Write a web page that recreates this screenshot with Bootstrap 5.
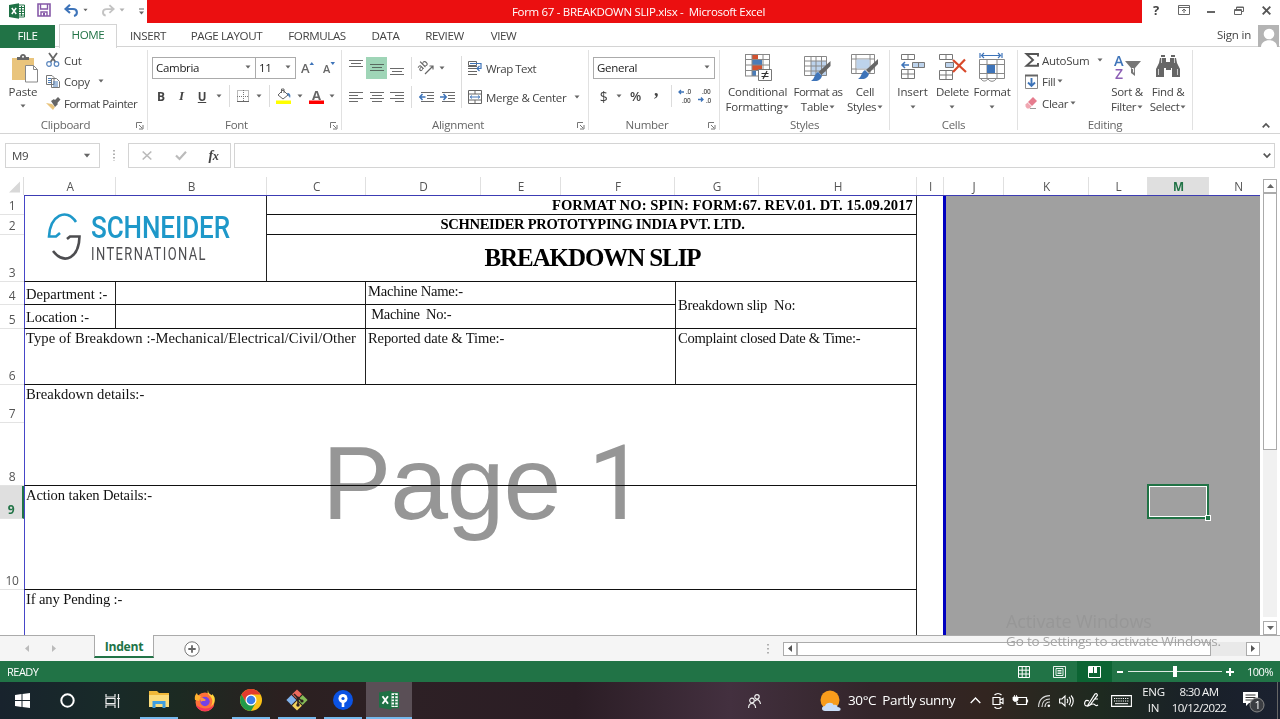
<!DOCTYPE html>
<html lang="en">
<head>
<meta charset="utf-8">
<title>Form 67 - BREAKDOWN SLIP.xlsx - Microsoft Excel</title>
<meta name="viewport" content="width=device-width, initial-scale=1">
<link href="https://cdn.jsdelivr.net/npm/bootstrap@5.3.0/dist/css/bootstrap.min.css" rel="stylesheet">
<style>
:root{--xl:#217346;--ln:#d4d4d4}
html,body{height:719px;overflow:hidden}
body{font:11.5px/15px "Open Sans","Noto Sans",sans-serif;color:#444;background:#fff;letter-spacing:-.3px}
svg{display:block;flex:none;overflow:visible}
span{white-space:nowrap}
.g{display:grid;align-items:center;justify-items:center}
.g>.l{justify-self:start}
/* title bar and ribbon tabs */
.titlebar{height:24px;grid-template-columns:33px 22px 42px 28px 22px 995px 28px 27px 28px 27px 28px;background:#fff}
.doc{background:#eb0f10;height:23px;width:100%;align-self:start;color:#fff;text-align:center;line-height:23px;padding-right:12px;font-size:11.5px;letter-spacing:-.32px}
.tabs{height:23px;grid-template-columns:55px 4px 58px 62px 95px 86px 51px 67px 51px 684px 44px 23px;border-bottom:1px solid var(--ln);font-size:11.6px;letter-spacing:-.4px}
.tabs>span{margin-top:-2px}
.tabs .file{background:var(--xl);color:#fff;width:100%;height:23px;text-align:center;line-height:21px;margin:0}
.tabs .home{border:1px solid var(--ln);border-bottom:0;background:#fff;color:var(--xl);width:100%;height:24px;line-height:20px;text-align:center;margin:0}
/* ribbon */
.ribbon{height:87px;border-bottom:1px solid var(--ln)}
.grp{height:80px;margin-top:3px;border-right:1px solid #e1e1e1;position:relative}
.grp .body{height:67px}
.grp .cap{height:13px;line-height:15px;color:#666;text-align:center}
.grp .dlg{position:absolute;right:3px;bottom:0}
.big{text-align:center;line-height:15px}
.field{border:1px solid #ababab;height:22px;width:100%;padding:0 4px 2px 3px;background:#fff;color:#222}
.vs{width:1px;height:22px;background:#dcdcdc}
.rows3{grid-template-rows:20px 22px 22px;justify-items:start;align-content:start}
.b{font-weight:700}
/* formula bar */
.fbar{height:43px;grid-template-columns:5px 95px 28px 103px 3px 1041px}
.fbox{border:1px solid var(--ln);height:25px;width:100%}
/* sheet */
.cols{display:grid;height:18px;grid-template-columns:24px 92px 151px 99px 115px 80px 114px 84px 158px 27px 60px 85px 59px 61px 51px;text-align:center;line-height:18px;font-size:11.8px;color:#555}
.cols>span{border-right:1px solid #e0e0e0;padding-left:1px}
.cols .on{background:#dfdfdf;color:var(--xl);font-weight:700;border-bottom:2px solid var(--xl)}
.cols>span:last-child{border:0;padding-left:8px}
.rowsH{width:24px;display:grid;grid-template-rows:20px 20px 47px 23px 24px 56px 38px 63px 33px 71px 45px;font-size:12px;color:#555}
.rowsH>span{display:flex;align-items:flex-end;justify-content:center;border-bottom:1px solid #e3e3e3;line-height:17px}
.rowsH>.on{background:#dfdfdf;color:var(--xl);font-weight:700;border-right:2px solid var(--xl)}
.sheet{width:1236px;height:440px;display:grid;grid-template-columns:92px 151px 99px 310px 241px 26px 3px 202px 61px 51px;grid-template-rows:19px 20px 47px 23px 24px 56px 101px 104px 45px;background:#a0a0a0;border-top:1px solid #3c3cb4;font:14.6px/17px "Liberation Serif",serif;color:#111;position:relative;letter-spacing:-.13px}
.c{background:#fff;border-right:1px solid #222;border-bottom:1px solid #111;padding:1px 0 0 2px;white-space:pre;overflow:hidden}
.c.a{border-left:1px solid #4646c8;padding-left:1px}
.bt{font-weight:700;color:#000}
.mark1{position:absolute;left:298px;top:229px;font:104px/116px "Liberation Sans",Arial,sans-serif;color:#969696;letter-spacing:-1.2px;mix-blend-mode:multiply}
.mark1 i{font-family:Roboto;font-style:normal}
.sel{position:absolute;left:1123px;top:288px;width:62px;height:35px;border:2px solid var(--xl);box-shadow:inset 0 0 0 1px #fff}
.sel::after{content:"";position:absolute;right:-4px;bottom:-4px;width:6px;height:6px;background:var(--xl);border:1px solid #fff;box-sizing:border-box}
.vsb{width:20px;padding:0 3px;height:458px}
.sb{border:1px solid #ababab;background:#fff;width:14px;height:14px;display:flex;align-items:center;justify-content:center}
/* bottom */
.sheetbar{height:26px;background:#f5f5f5;grid-template-columns:29px 27px 38px 60px 76px 536px 17px 14px 414px 35px 14px 20px;border-top:1px solid #ababab;position:relative}
.tab1{background:#fff;color:var(--xl);font-weight:700;width:100%;height:23px;align-self:start;margin-top:-1px;border:1px solid #ababab;border-top:0;border-bottom:2px solid var(--xl);text-align:center;line-height:23px;font-size:12.2px}
.act{position:absolute;left:1006px;white-space:nowrap;pointer-events:none}
.status{height:21px;background:var(--xl);color:#fff;grid-template-columns:7px 999px 35px 36px 35px 16px 94px 16px 44px;font-size:11px;letter-spacing:-.5px}
.status>span.l{line-height:19px;margin-top:-1px}
.tbar{height:37px;background:linear-gradient(90deg,#18232d,#182a29 8%,#1c2a22 14%,#2b2020 22%,#2d2025 32%,#2b1d25 45%,#43303f 57%,#33252a 68%,#322520 77%,#1e2a20 86%,#192029 94%,#1b2130);grid-template-columns:45px 45px 46px 46px 46px 46px 46px 46px 46px 319px 46px 65px 6px 117px 20px 25px 21px 25px 20px 30px 30px 35px 56px 47px 6px;color:#f4f4f4}
.tbar>.ap{width:38px;height:37px;display:flex;align-items:center;justify-content:center;border-bottom:2px solid #76b9ed}
.tbar>.cur{width:46px;background:#5a4f56}
.sm{text-align:center;line-height:16px;margin-top:-1px}
</style>
</head>
<body>
<svg width="0" height="0" class="position-absolute">
<symbol id="cr" viewBox="0 0 6 4"><path d="M.5 .5h5L3 3.500z" fill="#666"/></symbol>
<symbol id="dl" viewBox="0 0 8 8"><path d="M.5 6V.5H6M3 3l3 3M7 3v4H3" fill="none" stroke="#777"/></symbol>
<symbol id="xl" viewBox="0 0 16 16"><path d="M9 2h6.500v12H9z" fill="#fff" stroke="#217346"/><path d="M10 4.500h5M10 7h5M10 9.500h5M10 12h5M12.500 3v10" stroke="#217346"/><path d="M0 2l10-1.700v15.400L0 14z" fill="#1e7145"/><path d="M2.800 5l4.400 6M7.200 5l-4.400 6" stroke="#fff" stroke-width="1.500"/></symbol>
<symbol id="ac" viewBox="0 0 14 12"><path d="M0 1.500h14M2 4.500h10M0 7.500h14M2 10.500h10" stroke="#6a6a6a"/></symbol>
</svg>

<header class="g titlebar">
  <svg width="16" height="16" style="margin-top:-3px"><use href="#xl"/></svg>
  <svg width="14" height="14" viewBox="0 0 14 14" class="mb-1"><path d="M1 1h12v12H1z" fill="#fff" stroke="#8659a8" stroke-width="1.600"/><path d="M3.500 1v5h7V1M4 13V9h6v4" fill="none" stroke="#8659a8" stroke-width="1.400"/><path d="M6 10h2v3H6z" fill="#8659a8"/></svg>
  <span class="d-flex align-items-center gap-1 mb-1"><svg width="15" height="13" viewBox="0 0 15 13"><path d="M2 5h7c5 0 5 6 1 7M6 .8L1.500 5L6 9" fill="none" stroke="#3e74b9" stroke-width="2.100"/></svg><svg width="5" height="4"><use href="#cr"/></svg></span>
  <span class="d-flex align-items-center gap-1 mb-1 opacity-50 ms-1"><svg width="14" height="13" viewBox="0 0 15 13"><path d="M13 5H6C1 5 1 11 5 12M9 .8L13.500 5L9 9" fill="none" stroke="#888" stroke-width="2"/></svg><svg width="6" height="4"><use href="#cr"/></svg></span>
  <svg width="5" height="7" viewBox="0 0 5 7" style="margin:0 0 2px 10px"><path d="M0 1h5" stroke="#666"/><path d="M0 3.500h5L2.500 6.500z" fill="#666"/></svg>
  <div class="doc">Form 67 - BREAKDOWN SLIP.xlsx -&nbsp; Microsoft Excel</div>
  <span class="b mb-1" style="font-size:13px">?</span>
  <svg width="12" height="10" viewBox="0 0 12 10" class="mb-1"><path d="M.5 .5h11v9H.5zM.5 2.500h11M6 8V4.500M4 6l2-2 2 2" fill="none" stroke="#666"/></svg>
  <svg width="8" height="2" viewBox="0 0 8 2"><path d="M0 1h8" stroke="#666" stroke-width="2"/></svg>
  <svg width="10" height="9" viewBox="0 0 10 9" class="mb-1"><path d="M2.500 3V1h7v4.500H7.500M.5 3.500h7v5h-7zM.5 4.500h7M2.500 1.500h7" fill="none" stroke="#666"/></svg>
  <svg width="9" height="9" viewBox="0 0 9 9" class="mb-1"><path d="M.7 .7l7.600 7.600M8.300 .7L.7 8.300" stroke="#555" stroke-width="1.900"/></svg>
</header>

<nav class="g tabs">
  <span class="file">FILE</span><i></i><span class="home">HOME</span><span>INSERT</span><span>PAGE LAYOUT</span><span>FORMULAS</span><span>DATA</span><span>REVIEW</span><span>VIEW</span><i></i><span class="l" style="font-size:11.500px;letter-spacing:-.2px;margin-left:4px;margin-top:-4px">Sign in</span>
  <svg width="21" height="22" viewBox="0 0 21 22"><path d="M0 0h21v22H0z" fill="#b4b4b4"/><circle cx="11" cy="9" r="5.300" fill="#fff"/><path d="M3 22c0-9 16-9 16 0z" fill="#fff"/></svg>
</nav>

<section class="ribbon d-flex">
  <div class="grp" style="width:148px">
    <div class="body g" style="grid-template-columns:46px 1fr">
      <div class="big d-flex flex-column align-items-center align-self-start pt-1">
        <svg width="28" height="29" viewBox="0 0 28 29" class="ms-1"><path d="M1 4h22v22H1z" fill="#e9c47c"/><path d="M6 6V3h3c0-4 6-4 6 0h3v3z" fill="#666"/><circle cx="12" cy="2.700" r="1" fill="#fff"/><path d="M14.500 11.500h8l4 4v12.500h-12z" fill="#fff" stroke="#888"/><path d="M22.500 11.500v4h4" fill="none" stroke="#888"/></svg>
        <span style="margin-top:1px;letter-spacing:-.1px">Paste</span><svg width="6" height="4" style="margin-top:5px"><use href="#cr"/></svg>
      </div>
      <div class="g rows3 w-100 align-self-start">
        <span class="d-flex align-items-center"><svg width="14" height="14" viewBox="0 0 14 14" style="margin-right:4px"><path d="M3 0l6.500 9M11 0L4.500 9" stroke="#666" stroke-width="1.800"/><circle cx="3" cy="11" r="2.300" fill="none" stroke="#5a86bd" stroke-width="1.200"/><circle cx="10.500" cy="11" r="2.300" fill="none" stroke="#5a86bd" stroke-width="1.200"/></svg>Cut</span>
        <span class="d-flex align-items-center"><svg width="14" height="13" viewBox="0 0 14 13" style="margin-right:4px"><path d="M.5 .5h5.500l2 2v7H.5zM5.500 3.500h5l3 3v6h-8z" fill="#fff" stroke="#777"/><path d="M2 3.500h3M2 5.500h3M2 7.500h3M7 7h5M7 9h5M7 11h5" stroke="#4a7cb8"/></svg>Copy<svg width="6" height="4" class="ms-2"><use href="#cr"/></svg></span>
        <span class="d-flex align-items-center" style="letter-spacing:-.5px"><svg width="15" height="13" viewBox="0 0 15 13" style="margin-right:3px"><path d="M0 6l6 1 3 3-2 3z" fill="#e9c47c"/><path d="M5 4l3-2 4 5-3 3zM8 4l4-4 2.500 2.500L10.500 7z" fill="#666"/></svg>Format Painter</span>
      </div>
    </div>
    <div class="cap" style="padding-right:16px">Clipboard</div><svg class="dlg" width="8" height="8"><use href="#dl"/></svg>
  </div>

  <div class="grp" style="width:194px">
    <div class="body">
      <div class="g" style="grid-template-columns:4px 104px 40px 22px 21px;padding-top:7px;height:29px">
        <i></i><div class="field d-flex align-items-center justify-content-between"><span>Cambria</span><svg width="6" height="4"><use href="#cr"/></svg></div>
        <div class="field d-flex align-items-center justify-content-between border-start-0"><span>11</span><svg width="6" height="4"><use href="#cr"/></svg></div>
        <svg width="13" height="15" viewBox="0 0 13 15"><text x="0" y="12" font-size="13" font-weight="600" fill="#666">A</text><path d="M8.500 4L10.800 1L13 4z" fill="#3e74b9"/></svg>
        <svg width="12" height="15" viewBox="0 0 12 15"><text x="0" y="12" font-size="11" font-weight="600" fill="#666">A</text><path d="M7.500 1h4.500L9.800 4z" fill="#3e74b9"/></svg>
      </div>
      <div class="g" style="grid-template-columns:3px 20px 21px 20px 13px 8px 20px 12px 9px 20px 11px 22px 10px;height:34px">
        <i></i><span class="b" style="font-size:12px">B</span><span class="b fst-italic" style="font:italic bold 13px 'Liberation Serif'">I</span><span class="b text-decoration-underline">U</span><svg width="6" height="4"><use href="#cr"/></svg><i class="vs"></i>
        <svg width="12" height="12" viewBox="0 0 12 12"><path d="M.5 .5h11v11H.5zM6.500 0v12M0 6.500h12" fill="none" stroke="#777" stroke-dasharray="1 1"/><path d="M0 11.500h12" stroke="#666"/></svg><svg width="6" height="4"><use href="#cr"/></svg><i class="vs"></i>
        <svg width="16" height="16" viewBox="0 0 16 16"><path d="M7 2L12 7L7 11L2 7zM5.500 5V1h2.500v4" fill="#fff" stroke="#666"/><path d="M11 5c3 0 4 2 3 5-1-2-2-2-2-3z" fill="#4a7cb8"/><path d="M0 12.500h15V16H0z" fill="#ff0"/></svg><svg width="6" height="4"><use href="#cr"/></svg>
        <svg width="15" height="16" viewBox="0 0 15 16"><text x="3" y="11.500" font-size="13" font-weight="700" fill="#666">A</text><path d="M0 12.500h15V16H0z" fill="#f00"/></svg><svg width="6" height="4"><use href="#cr"/></svg>
      </div>
    </div>
    <div class="cap" style="padding-right:16px">Font</div><svg class="dlg" width="8" height="8"><use href="#dl"/></svg>
  </div>

  <div class="grp" style="width:247px">
    <div class="body g" style="grid-template-columns:120px 126px;align-items:start">
      <div class="w-100">
        <div class="g" style="grid-template-columns:4px 20px 21px 20px 9px 22px 8px;height:34px;margin-top:1px">
          <i></i><svg width="14" height="8" viewBox="0 0 14 8" class="mb-2"><path d="M0 .5h14M2 3.500h10M0 6.500h14" stroke="#6a6a6a"/></svg>
          <span class="g w-100" style="background:#9fd5b7;height:22px"><svg width="14" height="8" viewBox="0 0 14 8"><path d="M0 .5h14M2 3.500h10M0 6.500h14" stroke="#5a6a60"/></svg></span>
          <svg width="14" height="8" viewBox="0 0 14 8" class="mt-2"><path d="M0 .5h14M2 3.500h10M0 6.500h14" stroke="#6a6a6a"/></svg><i class="vs"></i>
          <svg width="15" height="14" viewBox="0 0 15 14"><text transform="translate(2 11) rotate(-45)" font-size="10" font-weight="600" fill="#666" x="-1" y="-1">ab</text><path d="M5 13L13 5M13 8.500V5h-3.500" fill="none" stroke="#666" stroke-width="1.200"/></svg><svg width="6" height="4"><use href="#cr"/></svg>
        </div>
        <div class="g" style="grid-template-columns:4px 20px 21px 20px 9px 21px 21px;height:24px">
          <i></i><svg width="14" height="12" viewBox="0 0 14 12"><path d="M0 1.500h14M0 4.500h9M0 7.500h14M0 10.500h9" stroke="#6a6a6a"/></svg><svg width="14" height="12"><use href="#ac"/></svg><svg width="14" height="12" viewBox="0 0 14 12"><path d="M0 1.500h14M5 4.500h9M0 7.500h14M5 10.500h9" stroke="#6a6a6a"/></svg><i class="vs"></i>
          <svg width="15" height="12" viewBox="0 0 15 12"><path d="M2 1.500h13M8 4.500h7M8 7.500h7M2 10.500h13" stroke="#6a6a6a"/><path d="M6.500 6H1M3.500 3L.8 6l2.700 3" fill="none" stroke="#3e74b9" stroke-width="1.500"/></svg>
          <svg width="15" height="12" viewBox="0 0 15 12"><path d="M2 1.500h13M8 4.500h7M8 7.500h7M2 10.500h13" stroke="#6a6a6a"/><path d="M0 6h6M3.500 3l2.700 3-2.700 3" fill="none" stroke="#3e74b9" stroke-width="1.500"/></svg>
        </div>
      </div>
      <div class="w-100 d-flex">
        <i class="vs" style="height:52px;margin:6px 6px 0 -1px"></i>
        <div>
        <div class="d-flex align-items-center" style="height:34px;margin-top:1px"><svg width="15" height="14" viewBox="0 0 15 14" style="margin-right:3px"><path d="M.5 .5h8v4h-8zM0 7.500h9M0 10.500h9M0 13.500h9M0 5.500h9" fill="#fff" stroke="#666"/><path d="M2 2.500h11v5H9M11.500 5L9 7.500l2.500 2.500" fill="none" stroke="#3e74b9" stroke-width="1.200"/></svg><span style="letter-spacing:-.5px">Wrap Text</span></div>
        <div class="d-flex align-items-center" style="height:24px"><svg width="14" height="14" viewBox="0 0 14 14" style="margin-right:4px"><path d="M.5 .5h13v13H.5zM.5 4h13M.5 10h13M7 .5V4M7 10v3.500" fill="#fff" stroke="#666"/><path d="M2 7h10M4 5.500L2.300 7 4 8.500M10 5.500L11.700 7 10 8.500" fill="none" stroke="#3e74b9"/></svg><span>Merge &amp; Center</span><svg width="6" height="4" class="ms-2"><use href="#cr"/></svg></div>
        </div>
      </div>
    </div>
    <div class="cap" style="padding-right:14px">Alignment</div><svg class="dlg" width="8" height="8"><use href="#dl"/></svg>
  </div>

  <div class="grp" style="width:131px">
    <div class="body">
      <div style="padding:7px 4px 0;height:29px"><div class="field d-flex align-items-center justify-content-between"><span>General</span><svg width="6" height="4"><use href="#cr"/></svg></div></div>
      <div class="g" style="grid-template-columns:4px 21px 10px 23px 18px 12px 15px 26px;height:34px">
        <i></i><span style="font-size:14px">$</span><svg width="6" height="4"><use href="#cr"/></svg><span style="font-size:13px;font-weight:600">%</span><span class="b" style="font:bold 18px/8px 'Liberation Serif';margin-top:-12px">,</span><i class="vs"></i>
        <svg width="14" height="14" viewBox="0 0 14 14" font-size="6.500" font-weight="600" fill="#555" letter-spacing="-.3"><path d="M6 3H1M3 1L1 3l2 2" fill="none" stroke="#3e74b9" stroke-width="1.300"/><text x="8" y="5">.0</text><text x="4" y="13.500">.00</text></svg>
        <svg width="14" height="14" viewBox="0 0 14 14" font-size="6.500" font-weight="600" fill="#555" letter-spacing="-.3"><path d="M0 10.500h5M3 8.500l2 2-2 2" fill="none" stroke="#3e74b9" stroke-width="1.300"/><text x="4" y="5">.00</text><text x="8" y="13.500">.0</text></svg>
      </div>
    </div>
    <div class="cap" style="padding-right:14px">Number</div><svg class="dlg" width="8" height="8"><use href="#dl"/></svg>
  </div>

  <div class="grp" style="width:170px">
    <div class="body g" style="grid-template-columns:75px 46px 48px;padding-top:2px;align-items:start">
      <div class="big d-flex flex-column align-items-center"><svg width="28" height="30" viewBox="0 0 28 30"><path d="M1 2h25v22H1z" fill="#fff"/><path d="M8 2h6v5H8zM8 13h10v5H8z" fill="#d35230"/><path d="M8 7h10v6H8zM8 18h4v6H8z" fill="#4a7cb8"/><path d="M1 2.500h25M1 7.500h25M1 13h25M1 18.500h25M1 24h14M1.500 2v22M8 2v22M19 2v16M25.500 2v16" stroke="#888" fill="none"/><path d="M14.500 17.500h13v11h-13z" fill="#fff" stroke="#777"/><path d="M17.500 21.500h7M17.500 24.500h7M23 19l-4 8" stroke="#333" stroke-width="1.200"/></svg><span style="margin-top:2px;letter-spacing:-.2px">Conditional</span><span style="letter-spacing:-.2px">Formatting <svg class="d-inline" width="6" height="4" style="vertical-align:2px;margin-left:-2px"><use href="#cr"/></svg></span></div>
      <div class="big d-flex flex-column align-items-center"><svg width="28" height="30" viewBox="0 0 28 30"><path d="M.5 4.500h22v19H.5z" fill="#fff"/><path d="M7 9h16v15H7z" fill="#bdd3ec"/><path d="M.5 4.500h22v19H.5zM.5 9h22M.5 14h22M.5 19h22M7 4v19M12 4v19M17.500 4v19" fill="none" stroke="#888"/><path d="M26.500 9v5l-9 9-3-3z" fill="#666"/><path d="M14 20l4 4c-2 6-7 5-11 5 4-2 3-7 7-9z" fill="#3e74b9"/></svg><span style="margin-top:2px;letter-spacing:-.5px">Format as</span><span>Table <svg class="d-inline" width="6" height="4" style="vertical-align:2px;margin-left:-2px"><use href="#cr"/></svg></span></div>
      <div class="big d-flex flex-column align-items-center"><svg width="28" height="30" viewBox="0 0 28 30"><path d="M.5 2.500h23v19H.5zM.5 7h23M.5 17h23M5 2v19M19 2v19" fill="#fff" stroke="#888"/><path d="M5.500 7.500h13v9h-13z" fill="#bdd3ec"/><path d="M27 7v5l-9 9-3-3z" fill="#666"/><path d="M14 18l4 4c-2 6-7 5-11 5 4-2 3-7 7-9z" fill="#3e74b9"/></svg><span style="margin-top:2px">Cell</span><span>Styles <svg class="d-inline" width="6" height="4" style="vertical-align:2px;margin-left:-2px"><use href="#cr"/></svg></span></div>
    </div>
    <div class="cap">Styles</div>
  </div>

  <div class="grp" style="width:128px">
    <div class="body g" style="grid-template-columns:45px 35px 44px;padding-top:2px;align-items:start">
      <div class="big d-flex flex-column align-items-center"><svg width="26" height="30" viewBox="0 0 26 30"><path d="M1.500 2.500h13v5h-13zM8 2.500v5M1.500 17.500h13v9h-13zM1.500 22h13M8 17.500v9" fill="#fff" stroke="#777"/><path d="M12.500 10.500h12v5h-12z" fill="#bdd3ec" stroke="#777"/><path d="M18.500 10v6" stroke="#777"/><path d="M9 13H2.500M5 10l-3 3 3 3" fill="none" stroke="#3e74b9" stroke-width="1.500"/></svg><span style="margin-top:2px;letter-spacing:-.1px">Insert</span><svg width="6" height="4" style="margin-top:6px"><use href="#cr"/></svg></div>
      <div class="big d-flex flex-column align-items-center"><svg width="28" height="30" viewBox="0 0 28 30"><path d="M1.500 2.500h13v5h-13zM8 2.500v5M1.500 18.500h13v9h-13zM1.500 23h13M8 18.500v9" fill="#fff" stroke="#777"/><path d="M7.500 10.500h8v5h-8z" fill="#bdd3ec" stroke="#777"/><path d="M15 8l13 12M27 7.500L15 20" stroke="#d8492a" stroke-width="2.200"/></svg><span style="margin-top:2px">Delete</span><svg width="6" height="4" style="margin-top:6px"><use href="#cr"/></svg></div>
      <div class="big d-flex flex-column align-items-center"><svg width="26" height="30" viewBox="0 0 26 30"><path d="M.5 7.500h25v19H.5zM.5 12.500h25M.5 21.500h25M8 7v20M18 7v20" fill="#fff" stroke="#888"/><path d="M8 13h8v8H8z" fill="#3e74b9"/><path d="M2 3.500h20M5 1L2.500 3.500 5 6M19 1l2.500 2.500L19 6M1 1v5M23 1v5" fill="none" stroke="#3e74b9" stroke-width="1.200"/><path d="M2 27c3 4 6 1 7 0 2 3 6 3 8 0" fill="#fff" stroke="#888"/></svg><span style="margin-top:2px">Format</span><svg width="6" height="4" style="margin-top:6px"><use href="#cr"/></svg></div>
    </div>
    <div class="cap">Cells</div>
  </div>

  <div class="grp" style="width:175px">
    <div class="body g" style="grid-template-columns:89px 40px 42px;align-items:start">
      <div class="g rows3 w-100" style="padding-left:7px">
        <span class="d-flex align-items-center"><svg width="14" height="14" viewBox="0 0 14 14" style="margin-right:3px"><path d="M13 3.500V1H1.500L8 7l-6.500 5.800H13V10" fill="none" stroke="#555" stroke-width="1.900"/></svg>AutoSum<svg width="6" height="4" class="ms-2"><use href="#cr"/></svg></span>
        <span class="d-flex align-items-center"><svg width="13" height="15" viewBox="0 0 13 15" style="margin-right:4px"><path d="M.5 1.500h12v13H.5z" fill="#fff" stroke="#888"/><path d="M0 1.500h13" stroke="#666" stroke-width="2"/><path d="M6.500 4v8M3 8.500L6.500 12 10 8.500" fill="none" stroke="#3e74b9" stroke-width="1.900"/></svg>Fill<svg width="6" height="4" style="margin-left:2px"><use href="#cr"/></svg></span>
        <span class="d-flex align-items-center"><svg width="13" height="12" viewBox="0 0 13 12" style="margin-right:4px"><path d="M8 0l4 4-5 5-4-4z" fill="#e67c8e"/><path d="M2.500 5.500l4 4-2 2H2L.5 9.500v-2z" fill="#f0a7b2"/><path d="M5 11.500h6" stroke="#999"/></svg>Clear<svg width="6" height="4" style="margin-left:2px"><use href="#cr"/></svg></span>
      </div>
      <div class="big d-flex flex-column align-items-center"><svg width="28" height="26" viewBox="0 0 28 26" style="margin:3px 0 4px"><text x="1" y="13" font-size="14.500" font-weight="600" fill="#3e74b9">A</text><text x="2" y="25.500" font-size="14" font-weight="600" fill="#8c5fb5">Z</text><path d="M12 8h16l-6 7v8l-4-3v-5z" fill="#777"/><path d="M18.800 15.500h1.800v4" stroke="#fff" fill="none"/></svg><span style="margin-top:1px">Sort &amp;</span><span>Filter <svg class="d-inline" width="6" height="4" style="vertical-align:2px;margin-left:-2px"><use href="#cr"/></svg></span></div>
      <div class="big d-flex flex-column align-items-center"><svg width="26" height="26" viewBox="0 0 26 26" style="margin:3px 0 4px"><path d="M5 5h6v4h4V5h6l1 5 3 6v8h-8v-9h-1v2h-5v-2H9v9H1v-8l3-6zM6 2h4v2H6zM16 2h4v2h-4z" fill="#666"/><path d="M6.500 5v5M19.500 5v5M3.500 16v6M22.500 16v6" stroke="#ccc"/></svg><span style="margin-top:1px">Find &amp;</span><span>Select <svg class="d-inline" width="6" height="4" style="vertical-align:2px;margin-left:-2px"><use href="#cr"/></svg></span></div>
    </div>
    <div class="cap">Editing</div>
  </div>
  <svg width="8" height="5" viewBox="0 0 8 5" class="ms-auto align-self-end" style="margin-right:10px;margin-bottom:5px"><path d="M.7 4.300L4 1l3.300 3.300" fill="none" stroke="#555" stroke-width="1.700"/></svg>
</section>

<section class="g fbar">
  <i></i><div class="fbox d-flex align-items-center justify-content-between ps-1 pe-1"><span style="margin-left:2px">M9</span><svg width="8" height="5" class="me-1"><use href="#cr"/></svg></div>
  <svg width="2" height="11" viewBox="0 0 2 11"><path d="M1 0v11" stroke="#999" stroke-width="1.500" stroke-dasharray="1.500 2"/></svg>
  <div class="fbox g" style="grid-template-columns:35px 33px 33px"><svg width="10" height="9" viewBox="0 0 10 9"><path d="M.7 .5l8.600 8M9.300 .5l-8.600 8" stroke="#bbb" stroke-width="1.700"/></svg><svg width="12" height="9" viewBox="0 0 12 9"><path d="M1 4.500L4.500 8 11 .8" fill="none" stroke="#bbb" stroke-width="2.200"/></svg><span style="font:italic bold 14px 'Liberation Serif'">f<small>x</small></span></div>
  <i></i><div class="fbox d-flex align-items-center justify-content-end"><svg width="8" height="5" viewBox="0 0 8 5" style="margin-right:3px"><path d="M.7 .7L4 4 7.300 .7" fill="none" stroke="#555" stroke-width="1.700"/></svg></div>
</section>

<main class="d-flex">
  <div>
    <div class="cols"><svg width="24" height="18" viewBox="0 0 24 18"><path d="M20 4.500v11H9z" fill="#d8d8d8"/><path d="M23.500 0v18" stroke="#ddd"/></svg><span>A</span><span>B</span><span>C</span><span>D</span><span>E</span><span>F</span><span>G</span><span>H</span><span>I</span><span>J</span><span>K</span><span>L</span><span class="on">M</span><span>N</span></div>
    <div class="d-flex" style="height:440px;overflow:hidden">
      <div class="rowsH"><span>1</span><span>2</span><span>3</span><span>4</span><span>5</span><span>6</span><span>7</span><span>8</span><span class="on">9</span><span>10</span><span class="border-0"></span></div>
      <div class="sheet">
        <div class="c a d-flex" style="grid-area:1/1/4/3;padding:14px 0 0 20px"><svg width="38" height="52" viewBox="0 0 38 52"><path d="M31 12C21-3 5 6 4 26.500h7L15 23" fill="none" stroke="#1e98c9" stroke-width="2.600"/><path d="M22 29l3-2.500h9.500C34 47 20 56 8 41" fill="none" stroke="#4d4d50" stroke-width="2.600"/></svg><svg width="142" height="52" viewBox="0 0 142 52" style="margin-left:8px;font-family:Roboto,sans-serif"><text x="0" y="28" font-size="32" textLength="139" lengthAdjust="spacingAndGlyphs" fill="#1e98c9" font-weight="500">SCHNEIDER</text><text x="0" y="49.500" font-size="18.500" textLength="116" lengthAdjust="spacingAndGlyphs" letter-spacing="2" fill="#4d4d50">INTERNATIONAL</text></svg></div>
        <div class="c bt text-end" style="grid-area:1/3/2/6;padding:1px 3px 0 0;letter-spacing:.08px">FORMAT NO: SPIN: FORM:67. REV.01. DT. 15.09.2017</div>
        <div class="c bt text-center" style="grid-area:2/3/3/6;letter-spacing:-.32px">SCHNEIDER PROTOTYPING INDIA PVT. LTD.</div>
        <div class="c bt text-center" style="grid-area:3/3/4/6;font-size:25px;line-height:44px;letter-spacing:-1.100px">BREAKDOWN SLIP</div>
        <div class="c a" style="grid-area:4/1;padding-top:4px;letter-spacing:0">Department :-</div><div class="c" style="grid-area:4/2/5/4"></div><div class="c" style="grid-area:4/4;letter-spacing:-.25px">Machine Name:-</div>
        <div class="c" style="grid-area:4/5/6/6;padding-top:15px;letter-spacing:-.2px">Breakdown slip  No:</div>
        <div class="c a" style="grid-area:5/1;padding-top:4px">Location :-</div><div class="c" style="grid-area:5/2/6/4"></div><div class="c" style="grid-area:5/4;letter-spacing:-.4px"> Machine  No:-</div>
        <div class="c a" style="grid-area:6/1/7/4;letter-spacing:.06px">Type of Breakdown :-Mechanical/Electrical/Civil/Other</div><div class="c" style="grid-area:6/4">Reported date &amp; Time:-</div><div class="c" style="grid-area:6/5;letter-spacing:-.3px">Complaint closed Date &amp; Time:-</div>
        <div class="c a" style="grid-area:7/1/8/6;letter-spacing:.02px">Breakdown details:-</div>
        <div class="c a" style="grid-area:8/1/9/6">Action taken Details:-</div>
        <div class="c a" style="grid-area:9/1/10/6;border-bottom:0">If any Pending :-</div>
        <div class="bg-white" style="grid-area:1/6/10/7"></div><div style="grid-area:1/7/10/8;background:#0000c0"></div>
        <div class="mark1">Page <i>1</i></div>
        <div class="sel"></div>
        <div class="act" style="left:982px;top:415px;font:18px/20px 'Open Sans';color:#979797">Activate Windows</div>
      </div>
    </div>
  </div>
  <div class="vsb d-flex flex-column">
    <div class="sb" style="margin-top:2px"><svg width="7" height="4" viewBox="0 0 7 4"><path d="M0 4L3.500 0 7 4z" fill="#666"/></svg></div>
    <div class="sb" style="height:257px"></div>
    <div class="flex-grow-1" style="background:#f1f1f1"></div>
    <div class="sb mt-1"><svg width="7" height="4" viewBox="0 0 7 4"><path d="M0 0h7L3.500 4z" fill="#666"/></svg></div>
  </div>
</main>

<footer>
  <div class="g sheetbar">
    <svg width="4" height="7" viewBox="0 0 4 7" class="ms-auto"><path d="M4 0v7L0 3.500z" fill="#bbb"/></svg><svg width="4" height="7" viewBox="0 0 4 7" class="ms-auto"><path d="M0 0v7l4-3.500z" fill="#bbb"/></svg><i></i>
    <span class="tab1">Indent</span>
    <svg width="16" height="16" viewBox="0 0 16 16"><circle cx="8" cy="8" r="7.200" fill="#fff" stroke="#777"/><path d="M8 4.300v7.400M4.300 8h7.400" stroke="#666" stroke-width="1.800"/></svg><i></i>
    <svg width="2" height="10" viewBox="0 0 2 10" style="margin-right:13px"><path d="M1 0v10" stroke="#999" stroke-width="1.500" stroke-dasharray="1.500 2.500"/></svg>
    <span class="sb"><svg width="4" height="7" viewBox="0 0 4 7"><path d="M4 0v7L0 3.500z" fill="#555"/></svg></span><span class="sb w-100"></span><span class="w-100" style="height:14px;background:#e9e9e9"></span><span class="sb"><svg width="4" height="7" viewBox="0 0 4 7"><path d="M0 0v7l4-3.500z" fill="#555"/></svg></span>
    <span class="act" style="top:-4px;font:13.500px/18px 'Open Sans';color:#a5a5a5;letter-spacing:-.18px">Go to Settings to activate Windows.</span>
  </div>
  <div class="g status">
    <i></i><span class="l">READY</span>
    <svg width="12" height="12" viewBox="0 0 12 12"><path d="M.5 .5h11v11H.5zM4.200 0v12M8 0v12M0 4.200h12M0 8h12" fill="none" stroke="#fff"/></svg>
    <svg width="13" height="12" viewBox="0 0 13 12"><path d="M.5 .5h12v11H.5zM3 2.500h7v7H3zM4.500 4.500h4M4.500 6h4M4.500 7.500h4" fill="none" stroke="#fff" stroke-width=".9"/></svg>
    <span class="g w-100" style="height:21px;background:#0c6433"><svg width="13" height="12" viewBox="0 0 13 12"><path d="M.5 .5h12v11H.5z" fill="none" stroke="#fff"/><path d="M1 1h4v6H1zM6 1h3v6H6z" fill="#fff"/></svg></span>
    <svg width="6" height="2"><path d="M0 1h6" stroke="#fff" stroke-width="2"/></svg>
    <svg width="94" height="11" viewBox="0 0 94 11"><path d="M0 5.500h94" stroke="#dfeae3"/><path d="M45 0h4v11h-4z" fill="#fff"/></svg>
    <svg width="8" height="8" viewBox="0 0 8 8"><path d="M0 4h8M4 0v8" stroke="#fff" stroke-width="2"/></svg><span>100%</span>
  </div>
  <div class="g tbar">
    <svg width="15" height="15" viewBox="0 0 15 15"><path d="M0 2l6.500-1v6H0zM7.500 .9L15 0v7H7.500zM0 8h6.500v6L0 13zM7.500 8H15v7l-7.500-1z" fill="#fff"/></svg>
    <svg width="15" height="15" viewBox="0 0 15 15"><circle cx="7.500" cy="7.500" r="6.200" fill="none" stroke="#fff" stroke-width="2"/></svg>
    <svg width="16" height="14" viewBox="0 0 16 14"><path d="M1 0v3h9V0M1 14v-3h9v3M1 4.500h9v5H1zM13.500 0v14M12 4.500h3" fill="none" stroke="#eee" stroke-width="1.200"/></svg>
    <span class="ap"><svg width="20" height="17" viewBox="0 0 20 17"><path d="M0 0h8l2 2h10v14H0z" fill="#f0b93a"/><path d="M0 4h20v12H0z" fill="#fbdc7c"/><path d="M3.500 17v-7h13v7h-3v-4h-7v4z" fill="#3f9ee0"/></svg></span>
    <svg width="22" height="22" viewBox="0 0 22 22"><circle cx="11" cy="12" r="9.500" fill="#ff7139"/><path d="M14 0c-1 3 0 4 2 6 3 3 3 7 1 10 6-4 4-10 1-12 0 0 0 2-1 1-2-1-3-3-3-5z" fill="#ffd43c"/><path d="M1 10C0 5 3 3 3 3c0 2 2 3 4 3l-2 5z" fill="#ffb02e"/><path d="M2 15c3 8 15 8 18 0-3 4-12 5-18 0z" fill="#f5345c"/><circle cx="11" cy="11.500" r="4.700" fill="#7542e5"/><path d="M6 8c3-1 4 1 6 2-2 2-4 0-5 2z" fill="#ff9640"/></svg>
    <span class="ap"><svg width="22" height="22" viewBox="0 0 22 22"><circle cx="11" cy="11" r="11" fill="#fbc116"/><path d="M1.500 5.500A11 11 0 0 1 20.500 5.500H11L6.200 13.700z" fill="#e33b2e"/><path d="M1.500 5.500A11 11 0 0 0 11 22L15.800 13.700 11 16.500 6.200 13.700z" fill="#229a48"/><circle cx="11" cy="11" r="5.500" fill="#fff"/><circle cx="11" cy="11" r="4.300" fill="#3b7ee8"/></svg></span>
    <span class="ap"><svg width="22" height="22" viewBox="0 0 22 22"><g transform="rotate(45 11 11)"><path d="M3.500 3.500h7v7h-7z" fill="#ec6a5e"/><path d="M11.500 3.500h7v7h-7z" fill="#86bc57"/><path d="M3.500 11.500h7v7h-7z" fill="#82b2ec"/><path d="M11.500 11.500h7v7h-7z" fill="#f3d25c"/></g><path d="M8 5l4 4v7M12 9l4 3" fill="none" stroke="#2b2020" stroke-width="1.500"/><circle cx="12" cy="9" r="1.600" fill="#2b2020"/><circle cx="12" cy="16" r="1.700" fill="#2b2020"/><circle cx="16" cy="12" r="1.600" fill="#2b2020"/></svg></span>
    <span class="ap"><svg width="20" height="20" viewBox="0 0 20 20"><circle cx="10" cy="10" r="10" fill="#0b53e4"/><circle cx="10" cy="8.500" r="4.500" fill="#fff"/><circle cx="10" cy="8.500" r="1.600" fill="#0b53e4"/><path d="M8.700 11h2.600v6H8.700z" fill="#fff"/></svg></span>
    <span class="ap cur"><svg width="20" height="20"><use href="#xl"/></svg></span><i></i>
    <svg width="13" height="14" viewBox="0 0 13 14"><circle cx="4" cy="6.500" r="2.300" fill="none" stroke="#eee" stroke-width="1.200"/><circle cx="9" cy="2.800" r="2.200" fill="none" stroke="#eee" stroke-width="1.200"/><path d="M.6 14c0-6 7-6 7 0M7 7c3-3 5 0 5.500 3" fill="none" stroke="#eee" stroke-width="1.200"/></svg>
    <svg width="22" height="22" viewBox="0 0 22 22" class="ms-auto"><circle cx="10" cy="10" r="9.500" fill="#f89c1c"/><path d="M5 21c-4 0-4-5 0-5 1-4 8-4 8.500-1 3-1 4 1 4 2 4 0 4 4 1 4z" fill="#c9ddf7"/></svg><i></i>
    <span style="font-size:13.500px;letter-spacing:-.4px" class="l text-white">30°C&nbsp; Partly sunny</span>
    <svg width="11" height="7" viewBox="0 0 11 7"><path d="M.7 6l4.800-5L10.300 6" fill="none" stroke="#fff" stroke-width="1.300"/></svg>
    <svg width="12" height="16" viewBox="0 0 12 16"><path d="M1 4.500h7v7H1zM8 7l3-1.500v5L8 9M2.500 2c2-2 5-2 7 0M2.500 14c2 2 5 2 7 0" fill="none" stroke="#fff" stroke-width="1.200"/></svg>
    <svg width="15" height="11" viewBox="0 0 15 11"><path d="M5 2.500h8.500v7H4V7M14.500 4.500v3" fill="none" stroke="#fff" stroke-width="1.200"/><path d="M0 2h5v3c-1 2-4 2-5 0zM1.500 0v2M3.500 0v2" fill="#fff" stroke="#fff" stroke-width=".8"/></svg>
    <svg width="12" height="12" viewBox="0 0 12 12"><path d="M.6 12C.6 5 5 .6 12 .6M4 12c0-5 3-8 8-8M7 12c0-3 2-5 5-5" fill="none" stroke="#ddd" stroke-width="1.200"/><circle cx="10.800" cy="10.800" r="1.300" fill="#fff"/></svg>
    <svg width="15" height="12" viewBox="0 0 15 12"><path d="M.6 4H3L6 1v10L3 8H.6zM8 4c1 1 1 3 0 4M10 2c2 2 2 6 0 8M12 .5c3 3 3 8 0 11" fill="none" stroke="#fff" stroke-width="1.100"/></svg>
    <svg width="15" height="15" viewBox="0 0 15 15"><path d="M4 12L11 1c2-1 3 1 2 2L6 12l-2 1zM5 8C1 6 0 10 1 12c2 3 5-1 8-1s2 3 5 1M11 6h3" fill="none" stroke="#fff" stroke-width="1.200"/></svg>
    <svg width="21" height="12" viewBox="0 0 21 12"><path d="M.6 .6h19.800v10.800H.6z" fill="none" stroke="#fff" stroke-width="1.100"/><path d="M3 3.500h15M3 6h15" stroke="#fff" stroke-dasharray="1.200 1"/><path d="M4 8.700h13" stroke="#fff"/></svg>
    <span class="sm">ENG<br>IN</span><span class="sm" style="letter-spacing:-.65px">8:30 AM<br>10/12/2022</span>
    <svg width="22" height="22" viewBox="0 0 22 22" style="margin:2px 0 0 6px"><path d="M0 1h15v11H6l-3 3v-3H0z" fill="#fff"/><path d="M2.500 4h10M2.500 6.500h10M2.500 9h7" stroke="#333"/><circle cx="14" cy="14" r="7" fill="#3b3d42" stroke="#888"/><text x="11.500" y="18" font-size="11" fill="#fff">1</text></svg><i style="width:1px;height:37px;background:#666"></i>
  </div>
</footer>
<script src="https://cdn.jsdelivr.net/npm/bootstrap@5.3.0/dist/js/bootstrap.bundle.min.js"></script>
</body>
</html>
